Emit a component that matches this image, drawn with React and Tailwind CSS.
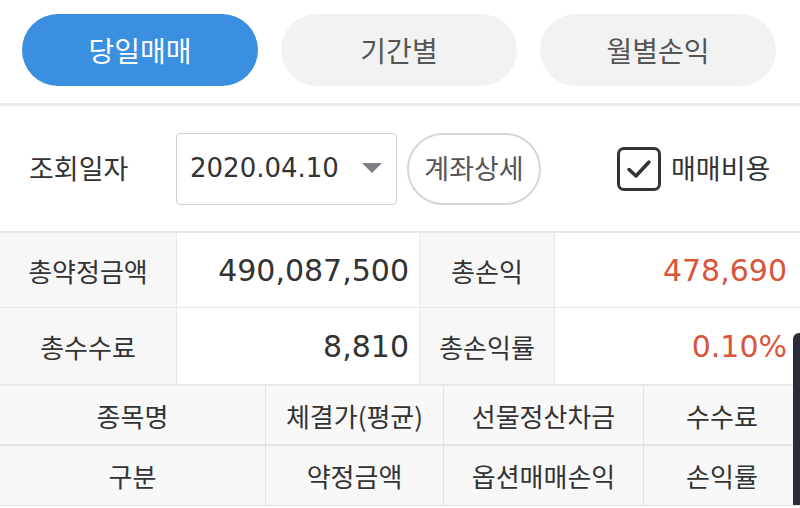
import React from 'react';

const font = { fontFamily: '"Noto Sans CJK KR", "Noto Sans", sans-serif' };
const num = { fontFamily: '"DejaVu Sans", "Noto Sans", sans-serif' };

const tabs = ['당일매매', '기간별', '월별손익'];

const headRows = [
  ['종목명', '체결가(평균)', '선물정산차금', '수수료'],
  ['구분', '약정금액', '옵션매매손익', '손익률'],
];

export default function App() {
  return (
    <div className="relative w-[800px] h-[508px] overflow-hidden bg-white text-[#333]" style={font}>
      {/* tabs */}
      <div className="flex gap-[23px] px-[22px] pt-[14px] pb-[17px]">
        {tabs.map((label, i) => (
          <button
            key={label}
            type="button"
            className={`h-[72px] w-[236px] rounded-full text-[28px] leading-none ${
              i === 0 ? 'bg-[#3a8fe0] text-white' : 'bg-[#f2f2f2] text-[#555]'
            }`}
          >
            {label}
          </button>
        ))}
      </div>
      <div className="h-[3px] bg-[#ebebeb]" />

      {/* filter row */}
      <div className="flex items-center h-[125px]">
        <span className="ml-[29px] w-[147px] text-[27px]">조회일자</span>
        <div className="flex items-center justify-between w-[221px] h-[72px] border border-[#cfcfcf] rounded-[4px] pl-[13px] pr-[14px]">
          <span className="text-[26px] text-[#333]" style={num}>2020.04.10</span>
          <svg width="20" height="11" viewBox="0 0 20 11">
            <path d="M0 0 H20 L10 10 Z" fill="#7d8088" />
          </svg>
        </div>
        <button
          type="button"
          className="ml-[10px] w-[134px] h-[72px] rounded-full border-2 border-[#d6d6d6] text-[27px] text-[#555]"
        >
          계좌상세
        </button>
        <div className="ml-[76px] flex items-center gap-[10px]">
          <div className="w-[44px] h-[44px] border-[3px] border-[#333] rounded-[7px] flex items-center justify-center">
            <svg width="26" height="20" viewBox="0 0 26 20" fill="none">
              <path d="M3 10.5 L10 17 L23 3" stroke="#333" strokeWidth="3.5" strokeLinecap="round" strokeLinejoin="round" />
            </svg>
          </div>
          <span className="text-[27px]">매매비용</span>
        </div>
      </div>

      {/* summary */}
      <div className="grid grid-cols-[177px_243px_135px_245px] border-t-2 border-[#e8e8e8]">
        <div className="h-[75px] flex items-center justify-center bg-[#f7f7f7] border-b border-r border-[#e8e8e8] text-[26px]">총약정금액</div>
        <div className="h-[75px] flex items-center justify-end pr-[10px] border-b border-r border-[#e8e8e8] text-[30px]" style={num}>490,087,500</div>
        <div className="h-[75px] flex items-center justify-center bg-[#f7f7f7] border-b border-r border-[#e8e8e8] text-[26px]">총손익</div>
        <div className="h-[75px] flex items-center justify-end pr-[13px] border-b border-[#e8e8e8] text-[30px] text-[#d9553a]" style={num}>478,690</div>
        <div className="h-[78px] flex items-center justify-center bg-[#f7f7f7] border-b-2 border-r border-[#e8e8e8] text-[26px]">총수수료</div>
        <div className="h-[78px] flex items-center justify-end pr-[10px] border-b-2 border-r border-[#e8e8e8] text-[30px]" style={num}>8,810</div>
        <div className="h-[78px] flex items-center justify-center bg-[#f7f7f7] border-b-2 border-r border-[#e8e8e8] text-[26px]">총손익률</div>
        <div className="h-[78px] flex items-center justify-end pr-[13px] border-b-2 border-[#e8e8e8] text-[30px] text-[#d9553a]" style={num}>0.10%</div>
      </div>

      {/* list header */}
      <div className="grid grid-cols-[266px_178px_200px_156px] bg-[#f8f8f8]">
        {headRows.map((row, r) =>
          row.map((label, c) => (
            <div
              key={label}
              className={`h-[60px] flex items-center justify-center text-[26px] border-[#e3e3e3] ${
                c < 3 ? 'border-r' : ''
              } ${r === 0 ? 'border-b-2' : 'border-b'}`}
            >
              {label}
            </div>
          ))
        )}
      </div>

      {/* floating dark bar at right edge */}
      <div className="absolute right-0 top-[333px] w-[7px] h-[172px] bg-[#2b2c3a] rounded-tl-[6px]" />
    </div>
  );
}
